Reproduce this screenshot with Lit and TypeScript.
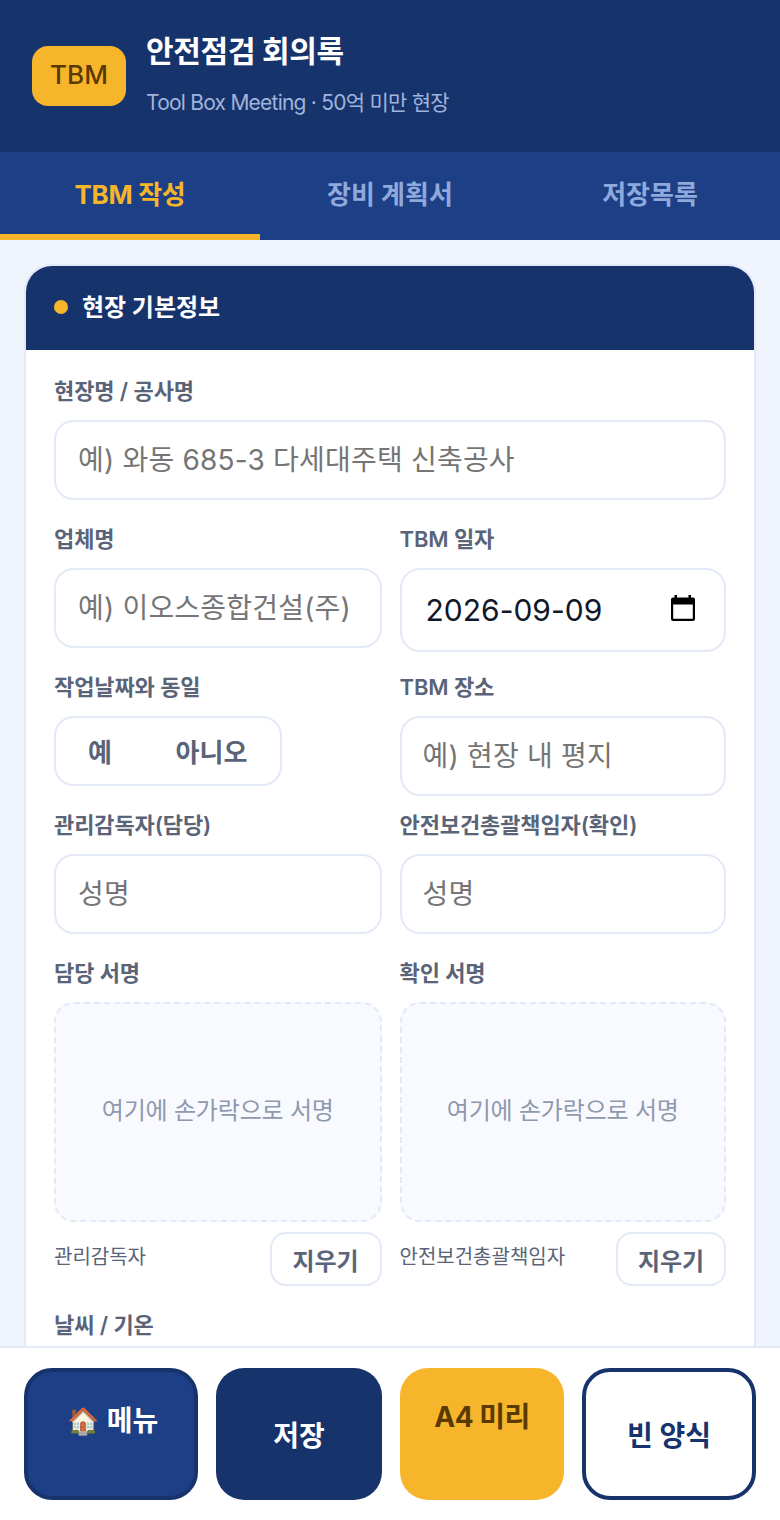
import { LitElement, html, css } from "lit";
import { customElement } from "lit/decorators.js";

@customElement("app-root")
export class AppRoot extends LitElement {
  static styles = css`
    :host {
      display: flex;
      flex-direction: column;
      height: 1520px;
      overflow: hidden;
      background: #f0f4fc;
      font-family: Inter, "Noto Sans CJK KR", sans-serif;
      color: #5a6478;
    }
    * { box-sizing: border-box; }
    .hdr {
      height: 152px;
      flex: none;
      background: #16336b;
      display: flex;
      align-items: center;
      gap: 20px;
      padding: 0 32px;
    }
    .logo {
      width: 94px;
      height: 60px;
      border-radius: 16px;
      background: #f7b52c;
      color: #5a3a00;
      font-size: 26px;
      font-weight: 500;
      padding-bottom: 3px;
      display: flex;
      align-items: center;
      justify-content: center;
    }
    .ttl { font-size: 30px; font-weight: 700; color: #fff; line-height: 44px; letter-spacing: -0.3px; }
    .sub { font-size: 21px; color: #a0b4dc; line-height: 32px; margin-top: 14px; letter-spacing: -0.77px; }
    .hgroup { margin-top: -4px; }
    .tabs {
      height: 88px;
      flex: none;
      background: #1c3f85;
      display: flex;
    }
    .tab {
      width: 260px;
      height: 88px;
      display: flex;
      align-items: center;
      justify-content: center;
      font-size: 26px;
      font-weight: 700;
      color: #8fa9dc;
      padding-bottom: 2px;
      border-bottom: 6px solid transparent;
    }
    .tab.on { color: #f7b52c; border-bottom-color: #f7b52c; letter-spacing: -0.3px; }
    .main { flex: 1; min-height: 0; overflow: hidden; padding: 24px 24px 0; }
    .card {
      background: #fff;
      border: 2px solid #e4e9f7;
      border-radius: 28px;
      overflow: hidden;
    }
    .chead {
      height: 84px;
      background: #16336b;
      display: flex;
      align-items: center;
      gap: 14px;
      padding: 0 28px 6px;
      color: #fff;
      font-size: 24px;
      font-weight: 700;
    }
    .dot { width: 14px; height: 14px; border-radius: 50%; background: #f7b52c; margin-top: 4px; }
    .body { padding: 24px 28px; display: flex; flex-direction: column; }
    .f { display: flex; flex-direction: column; min-width: 0; }
    label {
      display: block;
      font-size: 22px;
      font-weight: 600;
      line-height: 34px;
      margin-bottom: 12px;
      letter-spacing: -0.1px;
    }
    input {
      display: block;
      width: 100%;
      height: 80px;
      border: 2px solid #e4e9f7;
      border-radius: 20px;
      background: #fff;
      padding: 0 22px;
      font: 400 28px Inter, "Noto Sans CJK KR", sans-serif;
      font-feature-settings: "calt" 0;
      letter-spacing: 0.2px;
      color: #111827;
      outline: none;
    }
    input.rp { padding-left: 21px; }
    input::placeholder { color: #757575; }
    .date {
      height: 84px;
      border: 2px solid #e4e9f7;
      border-radius: 20px;
      display: flex;
      align-items: center;
      justify-content: space-between;
      padding: 0 29px 0 24px;
      font-size: 30px;
      color: #111827;
    }
    .dval { display: flex; }
    .date svg { margin-top: -4px; display: block; }
    .row { display: grid; grid-template-columns: 327.5px 326.5px; column-gap: 18px; }
    .g22 { margin-top: 22px; }
    .g18 { margin-top: 18px; }
    .g12 { margin-top: 12px; }
    .toggle {
      width: 228px;
      height: 70px;
      border: 2px solid #e4e9f7;
      border-radius: 20px;
      display: flex;
      align-items: center;
      font-size: 26px;
      font-weight: 700;
      padding-bottom: 2px;
    }
    .toggle span:first-child { width: 88px; text-align: center; }
    .toggle span:last-child { flex: 1; text-align: center; padding-right: 1px; }
    .sign {
      height: 220px;
      border: 2px dashed #e4e9f7;
      border-radius: 20px;
      background: #f8faff;
      display: flex;
      align-items: center;
      justify-content: center;
      padding-bottom: 8px;
      font-size: 24px;
      letter-spacing: -0.2px;
      color: #8f99ad;
    }
    .sfoot { display: flex; justify-content: space-between; align-items: flex-start; margin-top: 10px; }
    .cap { font-size: 20px; line-height: 34px; margin-top: 8px; }
    .clr {
      width: 112px;
      height: 54px;
      border: 2px solid #e4e9f7;
      border-radius: 16px;
      background: #fff;
      font-size: 24px;
      font-weight: 700;
      display: flex;
      align-items: center;
      justify-content: center;
    }
    .clr.r { width: 110px; }
    .weather { margin-top: 22px; }
    .bar {
      flex: none;
      height: 174px;
      background: #fff;
      border-top: 2px solid #e4e9f7;
      padding: 20px 24px;
      display: flex;
      gap: 18px;
    }
    .btn {
      height: 132px;
      border-radius: 28px;
      display: flex;
      justify-content: center;
      font-size: 28px;
      font-weight: 700;
      line-height: 40px;
    }
    .menu { width: 174px; background: #1c3f85; border: 4px solid #16336b; color: #fff; padding: 29px 0 0 3px; gap: 8px; }
    .emo { font-size: 26px; }
    .save { width: 166px; background: #16336b; color: #fff; align-items: center; padding-top: 4px; }
    .a4 { width: 164px; background: #f7b52c; color: #5a3a00; padding-top: 29px; letter-spacing: -0.5px; }
    .blank { width: 174px; background: #fff; border: 4px solid #16336b; color: #16336b; align-items: center; padding-top: 4px; }
  `;

  render() {
    return html`
      <header class="hdr">
        <div class="logo">TBM</div>
        <div class="hgroup">
          <div class="ttl">안전점검 회의록</div>
          <div class="sub">Tool Box Meeting · 50억 미만 현장</div>
        </div>
      </header>
      <nav class="tabs">
        <div class="tab on">TBM 작성</div>
        <div class="tab">장비 계획서</div>
        <div class="tab">저장목록</div>
      </nav>
      <main class="main">
        <section class="card">
          <div class="chead"><span class="dot"></span>현장 기본정보</div>
          <div class="body">
            <div class="f">
              <label>현장명 / 공사명</label>
              <input placeholder="예) 와동 685-3 다세대주택 신축공사" />
            </div>
            <div class="row g22">
              <div class="f"><label>업체명</label><input placeholder="예) 이오스종합건설(주)" /></div>
              <div class="f">
                <label>TBM 일자</label>
                <div class="date">
                  <span class="dval"><span>2026</span><span>-</span><span>09</span><span>-</span><span>09</span></span>
                  <svg width="24" height="26" viewBox="0 0 24 26">
                    <path fill="#000" fill-rule="evenodd" d="M3.5 0h2.5v2.5h11.5V0h2.5v2.5H22a2 2 0 0 1 2 2V24a2 2 0 0 1-2 2H2a2 2 0 0 1-2-2V4.5a2 2 0 0 1 2-2h1.5zM2.2 9.5V23.8h19.6V9.5z" />
                  </svg>
                </div>
              </div>
            </div>
            <div class="row g18">
              <div class="f">
                <label>작업날짜와 동일</label>
                <div class="toggle"><span>예</span><span>아니오</span></div>
              </div>
              <div class="f"><label>TBM 장소</label><input class="rp" placeholder="예) 현장 내 평지" /></div>
            </div>
            <div class="row g12">
              <div class="f"><label>관리감독자(담당)</label><input placeholder="성명" /></div>
              <div class="f"><label>안전보건총괄책임자(확인)</label><input class="rp" placeholder="성명" /></div>
            </div>
            <div class="row g22">
              <div class="f">
                <label>담당 서명</label>
                <div class="sign">여기에 손가락으로 서명</div>
                <div class="sfoot"><span class="cap">관리감독자</span><span class="clr">지우기</span></div>
              </div>
              <div class="f">
                <label>확인 서명</label>
                <div class="sign">여기에 손가락으로 서명</div>
                <div class="sfoot"><span class="cap">안전보건총괄책임자</span><span class="clr r">지우기</span></div>
              </div>
            </div>
            <div class="f weather"><label>날씨 / 기온</label></div>
          </div>
        </section>
      </main>
      <footer class="bar">
        <div class="btn menu"><span class="emo">🏠</span><span>메뉴</span></div>
        <div class="btn save">저장</div>
        <div class="btn a4">A4 미리</div>
        <div class="btn blank">빈 양식</div>
      </footer>
    `;
  }
}
